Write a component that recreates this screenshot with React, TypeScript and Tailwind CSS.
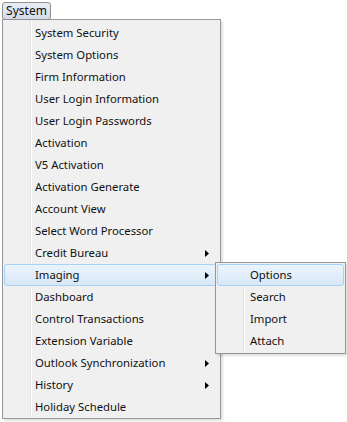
const items: { label: string; sub?: boolean }[] = [
    { label: "System Security" },
    { label: "System Options" },
    { label: "Firm Information" },
    { label: "User Login Information" },
    { label: "User Login Passwords" },
    { label: "Activation" },
    { label: "V5 Activation" },
    { label: "Activation Generate" },
    { label: "Account View" },
    { label: "Select Word Processor" },
    { label: "Credit Bureau", sub: true },
    { label: "Imaging", sub: true },
    { label: "Dashboard" },
    { label: "Control Transactions" },
    { label: "Extension Variable" },
    { label: "Outlook Synchronization", sub: true },
    { label: "History", sub: true },
    { label: "Holiday Schedule" },
];

const subItems = ["Options", "Search", "Import", "Attach"];

// win7 style gutter: two thin lines next to the icon column
const gutter =
    "bg-[linear-gradient(to_right,#f0f0f0_27px,#e2e3e3_27px,#e2e3e3_28px,#ffffff_28px,#ffffff_29px,#f0f0f0_29px)]";

function Arrow() {
    return (
        <svg width="4" height="7" viewBox="0 0 4 7">
            <path d="M0 0 L4 3.5 L0 7 Z" fill="#000" />
        </svg>
    );
}

function Row({ label, active, sub, inset }: { label: string; active?: boolean; sub?: boolean; inset?: boolean }) {
    return (
        <div
            className={`flex h-[22px] items-center justify-between rounded-[3px] border pr-[9px] ${
                inset ? "pl-[32px]" : "pl-[30px]"
            } ${
                active
                    ? "border-[#a8d2f5] bg-gradient-to-b from-[#ebf4fc] to-[#d8e8f8]"
                    : "border-transparent"
            }`}
        >
            <span>{label}</span>
            {sub && <Arrow />}
        </div>
    );
}

export default function App() {
    return (
        <div className="relative flex h-[422px] w-[347px] flex-col items-start overflow-hidden bg-white pl-[2px] pt-[2px] text-[11.3px] text-[#111] font-['Segoe_UI','Noto_Sans','Open_Sans',sans-serif]">
            <div className="z-10 flex h-[18px] w-[49px] items-center justify-center rounded-[3px] border border-[#8e8f8f] bg-gradient-to-b from-[#e9eef6] to-[#d4dbe6] text-[12px] leading-none">
                System
            </div>
            <div
                className={`-mt-px flex w-[219px] flex-col border border-[#979797] px-px pt-[2px] shadow-[2px_2px_2px_rgba(0,0,0,0.12)] ${gutter}`}
            >
                {items.map((it) => (
                    <Row key={it.label} label={it.label} sub={it.sub} active={it.label === "Imaging"} />
                ))}
            </div>
            <div
                className={`absolute left-[215px] top-[262px] z-20 flex w-[131px] flex-col border border-[#979797] p-px shadow-[2px_2px_2px_rgba(0,0,0,0.12)] ${gutter}`}
            >
                {subItems.map((s, i) => (
                    <Row key={s} label={s} active={i === 0} inset />
                ))}
            </div>
        </div>
    );
}
